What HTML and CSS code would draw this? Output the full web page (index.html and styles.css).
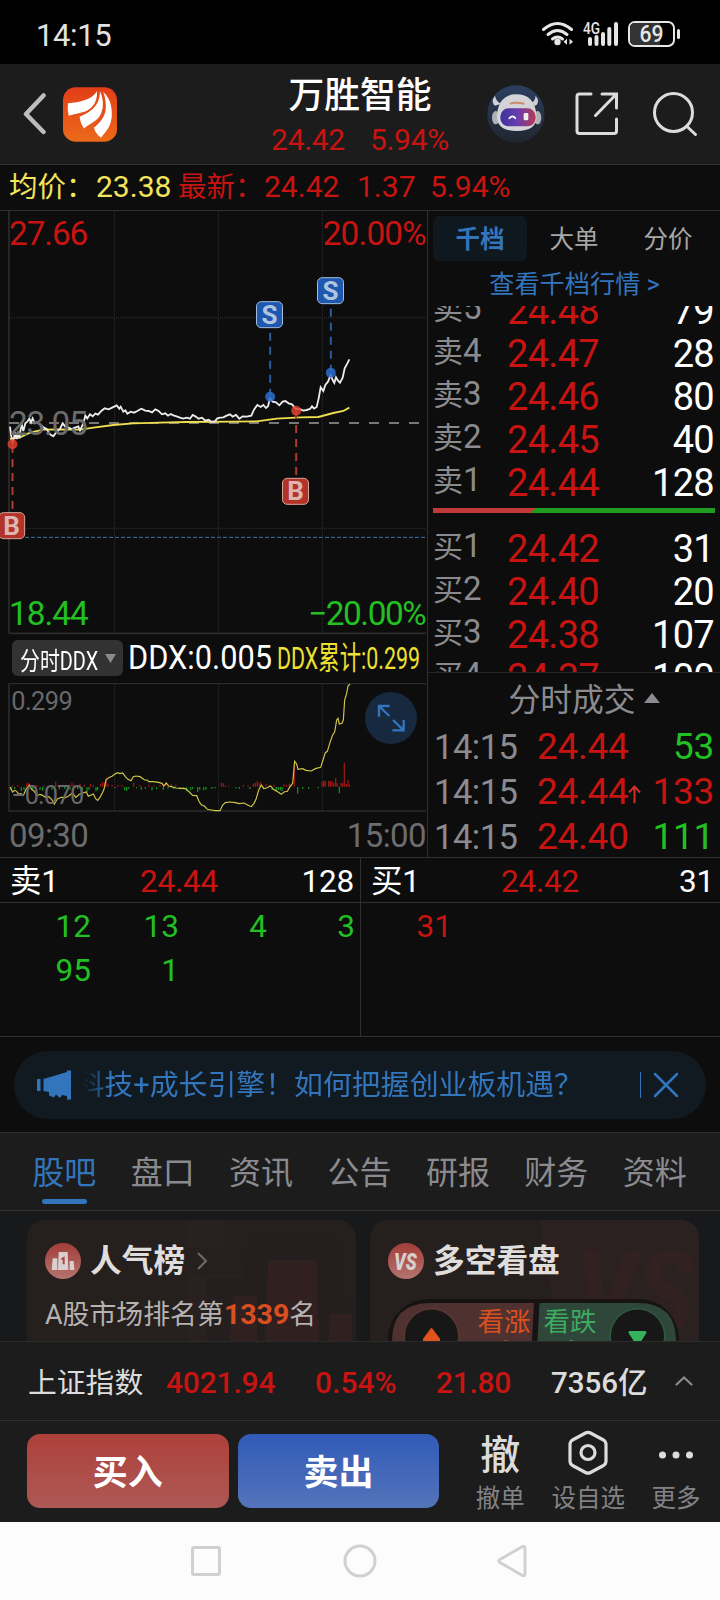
FILE: index.html
```html
<!DOCTYPE html>
<html lang="zh-CN">
<head>
  <meta charset="UTF-8" />
  <meta name="viewport" content="width=device-width, initial-scale=1.0" />
  <title>万胜智能</title>
  <link rel="stylesheet" href="styles.css">
</head>
<body>
  <div class="status-bar">
    <span class="clock">14:15</span>
    <svg class="status-icons" width="140" height="30" viewBox="0 0 140 30">
      <g fill="none" stroke="#e6e6e6" stroke-width="3" stroke-linecap="round">
        <path d="M3.500 10.500Q17.500 -1.500 31.500 10.500" />
        <path d="M8 15.500Q17.500 7.500 27 15.500" />
        <path d="M12.500 20Q17.500 16 22.500 20" />
      </g>
      <circle cx="17.500" cy="23" r="3.200" fill="#e6e6e6" />
      <path d="M23.500 22.800l3.500-3v6zM33 22.800l-3.500-3v6z" fill="#e6e6e6" />
      <text x="43" y="15" class="net-label" textLength="17" lengthAdjust="spacingAndGlyphs">4G</text>
      <path d="M50 20v5M56.500 18v7M63 15v10M69.300 10v15M76 5v20" stroke="#e6e6e6" stroke-width="4" stroke-linecap="round" />
      <rect x="89" y="3" width="45" height="24" rx="6" fill="none" stroke="#e6e6e6" stroke-width="2" />
      <path d="M90 9q0-5 5-5h25v22H95q-5 0-5-5z" fill="#333" />
      <path d="M138.500 11.500v7" stroke="#e6e6e6" stroke-width="3" stroke-linecap="round" />
      <text x="99.500" y="23" class="battery-label" textLength="24" lengthAdjust="spacingAndGlyphs">69</text>
    </svg>
  </div>

  <header class="header">
    <div class="header-left">
      <svg width="24" height="44" viewBox="0 0 24 44"><path d="M20.500 3.500L3 22L20.500 40" fill="none" stroke="#bdbdbd" stroke-width="4.500" stroke-linecap="round" stroke-linejoin="round" /></svg>
      <svg class="logo" width="54" height="55" viewBox="0 0 162 164">
        <defs>
          <linearGradient id="logoBg" x1="0" y1="0" x2="0" y2="1"><stop offset="0" stop-color="#e23d18" /><stop offset="1" stop-color="#ec6a1a" /></linearGradient>
        </defs>
        <rect width="162" height="164" rx="38" fill="url(#logoBg)" />
        <path d="M102 12C88 36 50 46 15 48Q12 66 17 86C46 76 68 78 86 60Q104 42 102 12Z" fill="#fff" />
        <path d="M110 10C112 50 74 80 50 86Q50 106 63 124C82 108 102 104 114 80Q128 46 110 10Z" fill="#fff" />
        <path d="M118 12C134 60 128 90 93 118Q92 134 114 152C126 134 142 124 146 90Q150 38 118 12Z" fill="#fff" />
        <path d="M108 12C110 50 86 72 50 86M118 12C134 60 128 90 93 118" fill="none" stroke="#e5501a" stroke-width="5" />
      </svg>
    </div>
    <div class="header-title">
      <h1>万胜智能</h1>
      <div class="quote"><span>24.42</span><span>5.94%</span></div>
    </div>
    <div class="header-right">
      <svg width="58" height="58" viewBox="0 0 174 174">
        <defs>
          <linearGradient id="botBg" x1="0" y1="0" x2="0" y2="1"><stop offset="0" stop-color="#2c3f60" /><stop offset="1" stop-color="#20262f" /></linearGradient>
          <linearGradient id="botFace"><stop offset="0" stop-color="#3c33a0" /><stop offset=".5" stop-color="#6a3cae" /><stop offset="1" stop-color="#b83a50" /></linearGradient>
        </defs>
        <circle cx="87" cy="87" r="86" fill="url(#botBg)" />
        <path d="M24 32Q10 50 24 62L44 56Q28 52 24 32ZM146 32Q160 50 146 62L128 56Q144 52 146 32Z" fill="#d0d0d6" />
        <ellipse cx="26" cy="98" rx="11" ry="20" fill="#b0b1b8" /><ellipse cx="152" cy="98" rx="11" ry="20" fill="#b0b1b8" />
        <path d="M30 88Q36 28 88 28Q142 28 148 88Q154 138 90 138Q26 138 30 88Z" fill="#d4d3d7" />
        <path d="M68 56q20-6 44 0" stroke="#c98d70" stroke-width="6" fill="none" />
        <rect x="40" y="70" width="106" height="54" rx="25" fill="url(#botFace)" />
        <path d="M67 100q10-12 18 0" fill="none" stroke="#fff" stroke-width="5" stroke-linecap="round" />
        <rect x="110" y="84" width="14" height="22" rx="4" fill="#eee" />
      </svg>
      <svg width="44" height="44" viewBox="0 0 44 44" fill="none" stroke="#dcdcdc" stroke-width="3" stroke-linecap="round">
        <path d="M16 2H4.500Q2 2 2 4.500V39Q2 41.500 4.500 41.500H39Q41.500 41.500 41.500 39V27M27 2H41.500V16M41.500 2L20.500 23.500" />
      </svg>
      <svg width="46" height="46" viewBox="0 0 46 46" fill="none" stroke="#dcdcdc" stroke-width="3" stroke-linecap="round">
        <circle cx="21.500" cy="21.500" r="19" /><path d="M35 35.500L43.500 43.500" />
      </svg>
    </div>
  </header>

  <div class="avg-bar">
    <span class="yellow avg-label">均价：</span><span class="yellow avg-value">23.38</span>
    <span class="red last-label">最新：</span><span class="red last-value">24.42</span>
    <span class="red diff-value">1.37</span><span class="red">5.94%</span>
  </div>

  <main class="market">
    <section class="charts">
      <svg class="price-chart" width="427" height="424" viewBox="0 18 1281 1272">
        <g class="grid">
          <path d="M344 18V1284M656 18V1284M967 18V1284M30 338H1278M30 970H1278" />
        </g>
        <path class="axis" d="M27 18V1285M27 1285H1278" />
        <path d="M27 654H1260" stroke="#9a9a9a" stroke-width="5" stroke-dasharray="30 30" />
        <path d="M75 997H1278" stroke="#3f71a8" stroke-width="3" stroke-dasharray="12 6" />
        <polyline class="line-avg" points="30,702 60,697 90,683 130,674 180,673 240,674 280,668 340,660 400,655 480,653 560,651 700,650 770,649 830,641 900,637 955,636 1000,624 1030,618 1048,608" />
        <polyline class="line-price" points="30,665 33,690 38,710 42,698 45,682 50,702 54,686 58,700 62,672 66,662 70,678 76,655 82,650 88,641 93,652 98,640 104,655 112,652 122,660 132,668 140,672 150,688 160,694 170,680 180,672 188,655 196,665 206,668 215,672 225,668 235,664 240,676 250,655 256,632 262,640 270,628 278,634 286,626 294,629 304,618 314,610 326,613 338,607 350,601 358,611 362,605 370,620 376,616 382,626 392,620 402,623 412,618 424,611 436,617 446,618 456,622 466,613 476,618 486,628 496,625 504,632 512,627 520,631 530,634 540,638 550,641 560,638 570,641 578,630 586,634 596,641 606,638 616,647 626,644 634,650 644,650 652,640 660,638 670,637 680,632 690,628 698,635 708,630 718,641 728,634 740,635 754,632 762,614 772,600 782,606 790,600 798,609 804,604 810,580 818,590 828,592 838,601 848,590 856,588 866,595 876,598 888,612 898,612 910,617 920,615 930,612 936,604 942,611 950,606 956,580 962,547 970,558 976,540 984,530 992,510 998,525 1003,534 1008,517 1014,527 1020,533 1028,518 1034,490 1042,475 1048,463" />
        <g class="mark mark-sell">
          <path d="M810.500 383V570M992.500 311V498" />
          <circle cx="810.500" cy="575" r="15" /><circle cx="992.500" cy="503" r="15" />
          <rect x="769.500" y="290" width="78" height="78" rx="14" /><rect x="952.500" y="218" width="78" height="78" rx="14" />
          <text x="808.500" y="356">S</text><text x="991.500" y="284">S</text>
        </g>
        <g class="mark mark-buy">
          <path d="M37.500 720V912M888.500 618V812" />
          <circle cx="37.500" cy="718" r="15" /><circle cx="888.500" cy="617" r="15" />
          <rect x="-4" y="923" width="78" height="78" rx="14" /><rect x="847.500" y="820" width="78" height="78" rx="14" />
          <text x="35" y="989">B</text><text x="887" y="886">B</text>
        </g>
        <g class="scale-label">
          <text x="27" y="121" fill="#c81411" textLength="238">27.66</text>
          <text x="968" y="121" fill="#c81411" textLength="312">20.00%</text>
          <text x="27" y="691" fill="#6c6c6c" textLength="236">23.05</text>
          <text x="27" y="1261" fill="#22c022" textLength="239">18.44</text>
          <text x="924" y="1261" fill="#22c022" textLength="356">−20.00%</text>
        </g>
      </svg>

      <div class="ddx-bar">
        <button class="ddx-select"><span>分时DDX</span><svg width="11" height="9" viewBox="0 0 11 9"><path d="M0 0h11L5.500 9z" fill="#8b8b8f" /></svg></button>
        <svg width="295" height="44" viewBox="0 0 295 44">
          <text x="-1" y="33" class="ddx-value" textLength="144" lengthAdjust="spacingAndGlyphs">DDX:0.005</text>
          <text x="148" y="33" class="ddx-total" textLength="143" lengthAdjust="spacingAndGlyphs">DDX累计:0.299</text>
        </svg>
      </div>

      <div class="ddx-chart">
        <svg width="427" height="130" viewBox="0 159 1281 390">
          <g class="grid">
            <path d="M344 162V543M656 162V543M967 162V543" />
          </g>
          <path class="axis" d="M27 160V543H1278M27 160H1278" />
          <path d="M38 470v-4M54 470v-5M80 470v-10M86 470v-12M92 470v-6M110 470v-5M131 470v-4M167 470v-15M188 470v-6M201 470v-5M216 470v-12M222 470v-6M240 470v-9M253 470v-6M272 470v-8M280 470v-5M302 470v-9M308 470v-15M314 470v-12M318 470v-26M324 470v-9M336 470v-6M354 470v-6M366 470v-5M401 470v-12M420 470v-6M446 470v-6M462 470v-4M480 470v-6M498 470v-11M514 470v-8M527 470v-6M664 470v-12M670 470v-10M676 470v-4M686 470v-3M730 470v-5M744 470v-4M760 470v-9M766 470v-12M772 470v-16M778 470v-11M783 470v-15M798 470v-8M808 470v-5M822 470v-6M852 470v-7M860 470v-5M868 470v-9M874 470v-7M883 470v-70M966 470v-15M971 470v-18M976 470v-17M986 470v-18M991 470v-16M996 470v-17M1001 470v-12M1007 470v-26M1012 470v-11M1023 470v-12M1028 470v-10M1033 470v-71M1039 470v-9M1044 470v-20M1049 470v-6" stroke="#981616" stroke-width="4" />
          <path d="M34 471v10M44 471v6M64 471v12M72 471v8M98 471v6M120 471v9M128 471v11M141 471v5M156 471v8M178 471v7M194 471v5M210 471v8M233 471v6M247 471v9M261 471v15M267 471v9M288 471v13M293 471v10M346 471v4M374 471v10M380 471v12M386 471v5M410 471v4M424 471v8M436 471v5M456 471v10M470 471v7M490 471v9M504 471v5M521 471v6M540 471v7M551 471v4M560 471v13M572 471v10M578 471v6M593 471v15M599 471v8M611 471v10M618 471v8M636 471v5M645 471v4M708 471v4M718 471v5M750 471v6M790 471v7M816 471v8M829 471v13M835 471v9M841 471v10M846 471v12M893 471v20M908 471v5M926 471v5M955 471v4M1018 471v19" stroke="#168a1d" stroke-width="4" />
          <polyline class="line-ddx" points="30,471 38,486 44,481 50,484 56,493 62,491 70,496 78,478 88,465 95,478 103,484 110,497 120,493 128,496 136,502 146,500 155,508 163,522 172,507 184,502 196,503 206,498 217,489 228,502 238,493 248,489 259,486 265,499 280,492 287,506 293,511 300,502 307,489 312,478 318,450 326,443 336,439 344,433 352,428 360,431 368,429 376,440 384,448 393,452 400,440 408,438 420,440 434,450 442,450 446,455 460,455 476,457 486,460 491,468 499,459 506,468 514,470 528,474 542,475 556,476 568,486 578,496 590,497 598,516 604,524 614,529 622,538 634,540 646,542 660,542 668,525 676,518 690,516 706,518 718,521 732,519 744,526 754,530 762,520 768,508 776,480 784,465 792,476 800,474 812,468 820,478 834,486 844,493 852,486 862,484 870,470 878,460 884,394 890,402 894,418 908,416 918,421 934,423 946,416 962,412 968,393 976,368 982,364 990,337 998,315 1004,306 1010,270 1014,265 1018,282 1026,280 1030,270 1034,210 1040,190 1044,168 1050,162" />
          <text x="34" y="239" fill="#68686a" font-size="76" textLength="184">0.299</text>
          <text x="34" y="522" fill="#68686a" font-size="76" textLength="219">−0.070</text>
        </svg>
        <svg class="expand-btn" width="52" height="52" viewBox="0 0 156 156">
          <circle cx="78" cy="78" r="78" fill="#17293f" />
          <path d="M74 42H42V74M42 42L73 72M116 84V115H82M116 115L84 84" fill="none" stroke="#3375bd" stroke-width="7" />
        </svg>
      </div>
      <div class="time-axis"><span>09:30</span><span>15:00</span></div>
    </section>

    <section class="order-side">
      <div class="side-tabs"><span class="active">千档</span><span>大单</span><span>分价</span></div>
      <a class="side-link">查看千档行情 &gt;</a>
      <div class="book">
        <div class="book-row first"><span class="lv">卖<i>5</i></span><span class="price">24.48</span><span class="vol">79</span></div>
        <div class="book-row"><span class="lv">卖<i>4</i></span><span class="price">24.47</span><span class="vol">28</span></div>
        <div class="book-row"><span class="lv">卖<i>3</i></span><span class="price">24.46</span><span class="vol">80</span></div>
        <div class="book-row"><span class="lv">卖<i>2</i></span><span class="price">24.45</span><span class="vol">40</span></div>
        <div class="book-row"><span class="lv">卖<i>1</i></span><span class="price">24.44</span><span class="vol">128</span></div>
        <div class="ratio"></div>
        <div class="book-row"><span class="lv">买<i>1</i></span><span class="price">24.42</span><span class="vol">31</span></div>
        <div class="book-row"><span class="lv">买<i>2</i></span><span class="price">24.40</span><span class="vol">20</span></div>
        <div class="book-row"><span class="lv">买<i>3</i></span><span class="price">24.38</span><span class="vol">107</span></div>
        <div class="book-row"><span class="lv">买<i>4</i></span><span class="price">24.37</span><span class="vol">100</span></div>
      </div>
      <div class="deals">
        <div class="deals-title">分时成交<svg width="16" height="10" viewBox="0 0 16 10"><path d="M8 0L16 10H0z" fill="#8b8b8f" /></svg></div>
        <div class="deal-row"><span class="time">14:15</span><span class="price">24.44</span><span class="vol green">53</span></div>
        <div class="deal-row"><span class="time">14:15</span><span class="price">24.44</span><svg width="13" height="19" viewBox="0 0 13 19"><path d="M6.500 18V2M1 7.500L6.500 1.500L12 7.500" fill="none" stroke="#d0302c" stroke-width="2" /></svg><span class="vol red">133</span></div>
        <div class="deal-row"><span class="time">14:15</span><span class="price">24.40</span><span class="vol green">111</span></div>
      </div>
    </section>
  </main>

  <section class="queues">
    <div class="queue">
      <div class="queue-head"><span>卖1</span><span class="red">24.44</span><span>128</span></div>
      <div class="queue-body green"><span>12</span><span>13</span><span>4</span><span>3</span><span>95</span><span>1</span></div>
    </div>
    <div class="queue">
      <div class="queue-head"><span>买1</span><span class="red">24.42</span><span>31</span></div>
      <div class="queue-body red"><span>31</span></div>
    </div>
  </section>

  <div class="notice-wrap">
    <div class="notice">
      <svg width="35" height="30" viewBox="0 0 35 30"><path d="M0 9h3.500v12H0zM6.500 9L30 2V0.500h4V29.500h-4V26L25 25L23 28L19 24.500L17 27.500L12 25.500V22L6.500 21z" fill="#3375bd" /></svg>
      <div class="notice-text"><span>科技+成长引擎！如何把握创业板机遇？</span></div>
      <svg class="notice-close" width="26" height="26" viewBox="0 0 26 26"><path d="M2 2L24 24M24 2L2 24" stroke="#3375bd" stroke-width="2.500" stroke-linecap="round" /></svg>
    </div>
  </div>

  <nav class="tabs">
    <span class="active">股吧</span><span>盘口</span><span>资讯</span><span>公告</span><span>研报</span><span>财务</span><span>资料</span>
  </nav>

  <section class="cards">
    <div class="card">
      <svg class="card-bg" width="329" height="130" viewBox="0 0 329 130">
        <path d="M160 0h36v28h-36zM160 55h60V130h-60z" fill="#292120" />
        <path d="M220 14h92v62h17v54H180V57h38z" fill="#241e1e" />
        <path d="M241 40h49l2 90h-54zM206 76h24v54h-28zM303 94h22v36h-24z" fill="#302020" />
      </svg>
      <div class="card-title">
        <svg width="36" height="36" viewBox="0 0 108 108">
          <defs><linearGradient id="badge" x1="0" y1="0" x2="0" y2="1"><stop offset="0" stop-color="#a33d38" /><stop offset="1" stop-color="#b57470" /></linearGradient></defs>
          <circle cx="54" cy="54" r="54" fill="url(#badge)" />
          <path d="M23 46h14v35H20zM41 27h27l2 54H39zM74 54h12l2 27H74z" fill="#d8cfce" />
          <path d="M49 49l7-4v19" fill="none" stroke="#a94a45" stroke-width="6" />
        </svg>
        <h2>人气榜</h2>
        <svg class="arrow" width="12" height="18" viewBox="0 0 12 18"><path d="M2 1L10 9L2 17" fill="none" stroke="#6c6766" stroke-width="2.200" /></svg>
      </div>
      <div class="rank">A股市场排名第<b>1339</b>名</div>
    </div>
    <div class="card">
      <svg class="card-bg" width="329" height="130" viewBox="0 0 329 130">
        <path d="M170 0H329V130H190z" fill="#2a2120" />
        <text x="206" y="112" class="vs-mark" textLength="118" lengthAdjust="spacingAndGlyphs">VS</text>
      </svg>
      <div class="card-title">
        <svg width="36" height="36" viewBox="0 0 108 108">
          <circle cx="54" cy="54" r="54" fill="url(#badge)" />
          <text x="18" y="80" class="vs-badge" textLength="68" lengthAdjust="spacingAndGlyphs">VS</text>
        </svg>
        <h2>多空看盘</h2>
      </div>
      <svg class="vote" width="294" height="46" viewBox="0 0 294 46">
        <rect x="0" y="0" width="291" height="80" rx="40" fill="#171313" />
        <path d="M42 4H146L143 60H4V42Q4 4 42 4Z" fill="#4f322f" />
        <path d="M151.500 4H250Q288 4 288 42V60H148.500z" fill="#2f463a" />
        <circle cx="43.500" cy="37" r="28" fill="#5a3733" /><circle cx="249.500" cy="37" r="28" fill="#2e5a40" />
        <circle cx="43.500" cy="37" r="26.500" fill="#171717" /><circle cx="249.500" cy="37" r="26.500" fill="#171717" />
        <path d="M43.500 30L51 40V46H36V40z" fill="#e0531d" stroke="#e0531d" stroke-width="2" stroke-linejoin="round" />
        <path d="M242 33.500H257L249.500 45z" fill="#35b35c" stroke="#35b35c" stroke-width="3" stroke-linejoin="round" />
        <text x="89.500" y="32" fill="#dc5020" textLength="53">看涨</text>
        <text x="155.500" y="32" fill="#3dab60" textLength="53">看跌</text>
        <text x="113" y="57" fill="#b44a25" font-size="22">%</text>
        <text x="179" y="57" fill="#389755" font-size="22">%</text>
      </svg>
    </div>
  </section>

  <div class="index-bar">
    <span class="index-name">上证指数</span>
    <span class="red index-last">4021.94</span>
    <span class="red index-pct">0.54%</span>
    <span class="red index-diff">21.80</span>
    <span class="index-amount">7356亿</span>
    <svg width="18" height="10" viewBox="0 0 18 10"><path d="M1.500 8.500L9 1.500L16.500 8.500" fill="none" stroke="#8b8b8b" stroke-width="2.200" stroke-linecap="round" /></svg>
  </div>

  <footer class="actions">
    <button class="btn btn-buy">买入</button>
    <button class="btn btn-sell">卖出</button>
    <div class="tool tool-cancel"><span class="tool-char">撤</span><span>撤单</span></div>
    <div class="tool">
      <svg width="42" height="46" viewBox="0 0 42 46" fill="none" stroke="#dcdcdc" stroke-width="3.200">
        <path d="M18.500 3Q21 1.700 23.500 3L36.500 10Q39 11.500 39 14.500V31Q39 34 36.500 35.500L23.500 42.500Q21 43.800 18.500 42.500L5.500 35.500Q3 34 3 31V14.500Q3 11.500 5.500 10Z" stroke-linejoin="round" />
        <circle cx="21" cy="22.500" r="7" />
      </svg>
      <span>设自选</span>
    </div>
    <div class="tool">
      <svg width="42" height="46" viewBox="0 0 42 46" fill="#dcdcdc"><circle cx="7.500" cy="25" r="3.500" /><circle cx="21" cy="25" r="3.500" /><circle cx="34.500" cy="25" r="3.500" /></svg>
      <span>更多</span>
    </div>
  </footer>

  <div class="system-nav">
    <svg width="34" height="34" viewBox="0 0 34 34"><rect x="3.500" y="3.500" width="27" height="27" rx="1.500" /></svg>
    <svg width="34" height="34" viewBox="0 0 34 34"><circle cx="17" cy="17" r="15" /></svg>
    <svg width="34" height="34" viewBox="0 0 34 34"><path d="M25.500 2.500L2.500 15.800Q1 17 2.500 18.200L25.500 31.500Q28 32 28 30V4Q28 2 25.500 2.500Z" /></svg>
  </div>
</body>
</html>
```

FILE: styles.css
```css
:root {
  --bg: #0d0d0d;
  --panel: #1c1c1c;
  --line: #303030;
  --red: #c81411;
  --green: #22c022;
  --blue: #3375bd;
  --gray: #8b8b8f;
}

* {
  box-sizing: border-box;
}

body {
  margin: 0;
  width: 720px;
  height: 1600px;
  overflow: hidden;
  background: var(--bg);
  color: #fff;
  font-family: Roboto, "Noto Sans CJK SC", sans-serif;
  font-size: 30px;
}

svg {
  display: block;
  flex: none;
}

h1, h2 {
  margin: 0;
  font-weight: 400;
}

i {
  font-style: normal;
}

.red { color: var(--red); }
.green { color: var(--green); }
.yellow { color: #f3e45c; }

/* status bar */
.status-bar {
  height: 64px;
  background: #000;
  display: flex;
  justify-content: space-between;
  padding: 19px 40px 0 36px;
}

.clock {
  font-size: 31px;
  line-height: 34px;
  letter-spacing: -.4px;
  color: #e2e2e2;
}

.net-label {
  font-size: 16px;
  font-weight: 500;
  fill: #e6e6e6;
}

.battery-label {
  font-size: 23px;
  font-weight: 500;
  fill: #e6e6e6;
}

/* header */
.header {
  height: 101px;
  background: var(--panel);
  border-bottom: 1px solid var(--line);
  display: flex;
  justify-content: space-between;
}

.header-left {
  width: 240px;
  display: flex;
  align-items: center;
  padding-left: 23px;
}

.logo {
  margin-left: 16px;
}

.header-title {
  width: 240px;
  padding-top: 10px;
  text-align: center;
}

.header-title h1 {
  font-size: 35.8px;
  font-weight: 500;
  line-height: 44px;
}

.quote {
  display: flex;
  justify-content: center;
  gap: 25px;
  margin-top: 4px;
  color: var(--red);
  line-height: 36px;
  letter-spacing: -.3px;
}

.header-right {
  width: 240px;
  display: flex;
  align-items: center;
  padding-left: 7px;
}

.header-right svg + svg {
  margin-left: 30px;
}

.header-right svg + svg + svg {
  margin-left: 33px;
}

/* average price line */
.avg-bar {
  height: 46px;
  border-bottom: 1px solid var(--line);
  display: flex;
  padding-left: 9px;
  line-height: 43px;
}

.avg-label,
.last-label {
  width: 87px;
  font-size: 28.5px;
  line-height: 46px;
}

.avg-value {
  width: 82px;
}

.last-label {
  width: 86px;
}

.last-value {
  width: 93px;
}

.diff-value {
  width: 73px;
}

.market {
  display: flex;
  height: 647px;
  border-bottom: 1px solid var(--line);
}

/* charts */
.charts {
  width: 428px;
  border-right: 1px solid var(--line);
}

.grid {
  fill: none;
  stroke: #303030;
  stroke-width: 3;
  stroke-dasharray: 3 3;
}

.axis {
  fill: none;
  stroke: #2b2b2b;
  stroke-width: 5;
}

.line-avg,
.line-price,
.line-ddx {
  fill: none;
  stroke: #eedf50;
  stroke-width: 5.5;
}

.line-price {
  stroke: #ececec;
}

.line-ddx {
  stroke: #cfc64a;
  stroke-width: 3.5;
}

.scale-label {
  font-size: 100px;
}

.mark path {
  fill: none;
  stroke-width: 6;
  stroke-dasharray: 24 18;
}

.mark rect {
  stroke-width: 3;
}

.mark text {
  font-size: 78px;
  font-weight: 700;
  text-anchor: middle;
}

.mark circle {
  opacity: .85;
}

.mark-sell path { stroke: #2a5ca0; }
.mark-sell circle { fill: #2a6fd0; }
.mark-sell rect { fill: #1d58ae; stroke: #a5bddd; }
.mark-sell text { fill: #b0c4df; }
.mark-buy path { stroke: #ac3c31; }
.mark-buy circle { fill: #df402d; }
.mark-buy rect { fill: #b23428; stroke: #dba39d; }
.mark-buy text { fill: #dfb3ae; }

.ddx-bar {
  height: 48px;
  display: flex;
  align-items: flex-start;
  padding: 1px 0 0 12px;
}

.ddx-select {
  width: 111px;
  height: 36px;
  margin: 4px 6px 0 0;
  padding: 0 7px 0 8px;
  border: none;
  border-radius: 6px;
  background: #323232;
  color: #fff;
  font: inherit;
  font-size: 25.5px;
  display: flex;
  align-items: center;
  justify-content: space-between;
}

.ddx-select span {
  width: 78px;
  white-space: nowrap;
  text-align: left;
  transform: scaleX(.78);
  transform-origin: left;
}

.ddx-value {
  font-size: 33px;
  fill: #fff;
}

.ddx-total {
  font-size: 32px;
  fill: #eee032;
}

.ddx-chart {
  position: relative;
  height: 130px;
}

.expand-btn {
  position: absolute;
  left: 365px;
  top: 9px;
}

.time-axis {
  display: flex;
  justify-content: space-between;
  padding: 0 1px 0 9px;
  font-size: 33px;
  line-height: 45px;
  letter-spacing: -.6px;
  color: #6c6c6e;
}

/* order book */
.order-side {
  width: 292px;
}

.side-tabs {
  display: flex;
  height: 50px;
  padding: 5px 5px 0;
  font-size: 24.5px;
  line-height: 47px;
  text-align: center;
  color: #a8a8a8;
}

.side-tabs span {
  flex: 1;
}

.side-tabs .active {
  background: #10181f;
  border-radius: 7px;
  color: var(--blue);
  font-weight: 700;
}

.side-link {
  display: block;
  height: 45px;
  padding-left: 1px;
  text-align: center;
  font-size: 25.2px;
  line-height: 48px;
  color: var(--blue);
}

.book {
  height: 367px;
  overflow: hidden;
  border-bottom: 1px solid #262626;
}

.book-row {
  display: flex;
  height: 43px;
  padding: 0 6px 0 5px;
  line-height: 45px;
}

.book-row.first {
  margin-top: -17px;
}

.lv {
  width: 74px;
  font-size: 30px;
  line-height: 38px;
  color: var(--gray);
}

.lv i {
  font-size: 33px;
}

.book .price,
.book .vol {
  font-size: 38px;
  letter-spacing: -.7px;
}

.price {
  color: var(--red);
}

.vol {
  margin-left: auto;
}

.ratio {
  height: 5px;
  margin: 4px 5px 14px;
  background: linear-gradient(135deg, #c13a37 72px, #1f9c1f 73px);
}

.deals-title {
  display: flex;
  justify-content: center;
  align-items: center;
  gap: 8px;
  height: 50px;
  padding: 0 0 3px 20px;
  font-size: 31.8px;
  color: var(--gray);
}

.deals-title svg {
  margin-top: 2px;
}

.deal-row {
  display: flex;
  align-items: baseline;
  height: 45px;
  line-height: 47px;
  padding: 0 6px;
  font-size: 37px;
  letter-spacing: -.3px;
}

.deal-row .time {
  width: 103px;
  font-size: 34.5px;
  letter-spacing: -.5px;
  color: var(--gray);
}

/* broker queues */
.queues {
  display: flex;
  height: 179px;
  border-bottom: 1px solid var(--line);
}

.queue {
  width: 360px;
}

.queue + .queue {
  border-left: 1px solid var(--line);
}

.queue-head {
  display: grid;
  grid-template-columns: 130px 100px 1fr;
  height: 45px;
  padding: 0 6px 0 10px;
  border-bottom: 1px solid var(--line);
  font-size: 31.5px;
  line-height: 47px;
  letter-spacing: -.2px;
}

.queue-head span:last-child {
  text-align: right;
}

.queue-body {
  display: grid;
  grid-template-columns: repeat(4, 88px);
  grid-auto-rows: 44px;
  padding: 2px 0 0 3px;
  font-size: 31.5px;
  line-height: 44px;
  text-align: right;
}

/* notice */
.notice-wrap {
  height: 95px;
  padding: 14px 14px 0;
}

.notice {
  display: flex;
  align-items: center;
  height: 68px;
  padding: 0 27px 0 23px;
  border-radius: 34px;
  background: #111921;
  color: var(--blue);
}

.notice-text {
  display: flex;
  justify-content: flex-end;
  width: 511px;
  margin-left: 11px;
  overflow: hidden;
  font-size: 28.9px;
  line-height: 42px;
  white-space: nowrap;
  -webkit-mask-image: linear-gradient(90deg, transparent, #000 26px);
  mask-image: linear-gradient(90deg, transparent, #000 26px);
}

.notice-text span {
  margin-right: 11px;
}

.notice-close {
  box-sizing: content-box;
  margin-left: auto;
  padding-left: 12px;
  border-left: 1px solid var(--blue);
}

/* tabs */
.tabs {
  display: flex;
  height: 79px;
  padding: 0 16px 0 15px;
  background: var(--panel);
  border-top: 1px solid var(--line);
  border-bottom: 1px solid var(--line);
  font-size: 32px;
  line-height: 80px;
  text-align: center;
  color: var(--gray);
}

.tabs span {
  flex: 1;
}

.tabs .active {
  color: var(--blue);
}

.tabs .active::after {
  content: "";
  display: block;
  width: 45px;
  height: 5px;
  margin: -14px auto 0;
  border-radius: 3px;
  background: var(--blue);
}

/* cards */
.cards {
  display: flex;
  gap: 14px;
  height: 130px;
  padding: 9px 21px 0 27px;
  overflow: hidden;
  background: #18191b;
}

.card {
  position: relative;
  width: 329px;
  height: 170px;
  padding: 20px 18px 0;
  border-radius: 18px;
  background: #251f1e;
  overflow: hidden;
}

.card-bg {
  position: absolute;
  left: 0;
  top: 0;
}

.card-title {
  position: relative;
  display: flex;
  align-items: center;
  height: 42px;
}

.card-title h2 {
  margin: 2px 0 0 9px;
  font-size: 31.7px;
  font-weight: 700;
  line-height: 42px;
  color: #e0dedd;
}

.card-title .arrow {
  margin-left: 11px;
}

.rank {
  position: relative;
  margin-top: 13px;
  font-size: 26.9px;
  line-height: 40px;
  color: #b5b2b1;
}

.rank b {
  font-size: 28.5px;
  color: #da4e20;
}

.vs-mark {
  font-size: 115px;
  font-weight: 900;
  font-style: italic;
  fill: #312121;
}

.vs-badge {
  font-size: 70px;
  font-weight: 900;
  font-style: italic;
  fill: #d8cfce;
}

.vote {
  position: relative;
  margin-top: 17px;
  font-size: 26.5px;
}

/* index bar */
.index-bar {
  display: flex;
  align-items: center;
  height: 80px;
  padding-left: 28px;
  background: var(--panel);
  border-top: 1px solid #2b2b2b;
  border-bottom: 1px solid var(--line);
  line-height: 80px;
  font-weight: 500;
}

.index-bar span {
  padding-top: 3px;
}

.index-name {
  width: 138px;
  font-size: 28.8px;
  font-weight: 400;
  color: #dcdcdc;
}

.index-last { width: 149px; letter-spacing: -.2px; }
.index-pct { width: 121px; }
.index-diff { width: 115px; letter-spacing: -.3px; }

.index-amount {
  width: 124px;
  color: #dcdcdc;
  font-size: 29.5px;
}

/* bottom actions */
.actions {
  display: flex;
  height: 101px;
  padding: 13px 0 0 27px;
  background: var(--panel);
}

.btn {
  width: 202px;
  height: 74px;
  padding: 0 0 3px;
  border: none;
  border-radius: 13px;
  color: #fff;
  font: inherit;
  font-size: 35px;
  font-weight: 700;
}

.btn-buy {
  background: linear-gradient(#ae403b, #ad5955);
}

.btn-sell {
  margin-left: 9px;
  background: linear-gradient(#315ab8, #5474ba);
}

.tool {
  display: flex;
  flex-direction: column;
  align-items: center;
  gap: 6px;
  width: 88px;
  margin-top: -4px;
  font-size: 24.5px;
  line-height: 34px;
  color: #828285;
}

.tool-cancel {
  margin-left: 17px;
}

.tool-char {
  height: 46px;
  font-size: 40px;
  line-height: 52px;
  font-weight: 500;
  color: #dcdcdc;
}

/* android navigation */
.system-nav {
  display: flex;
  justify-content: center;
  gap: 120px;
  height: 78px;
  padding-top: 22px;
  background: #fcfcfc;
}

.system-nav svg {
  fill: none;
  stroke: #d0d0d0;
  stroke-width: 3;
}
```
